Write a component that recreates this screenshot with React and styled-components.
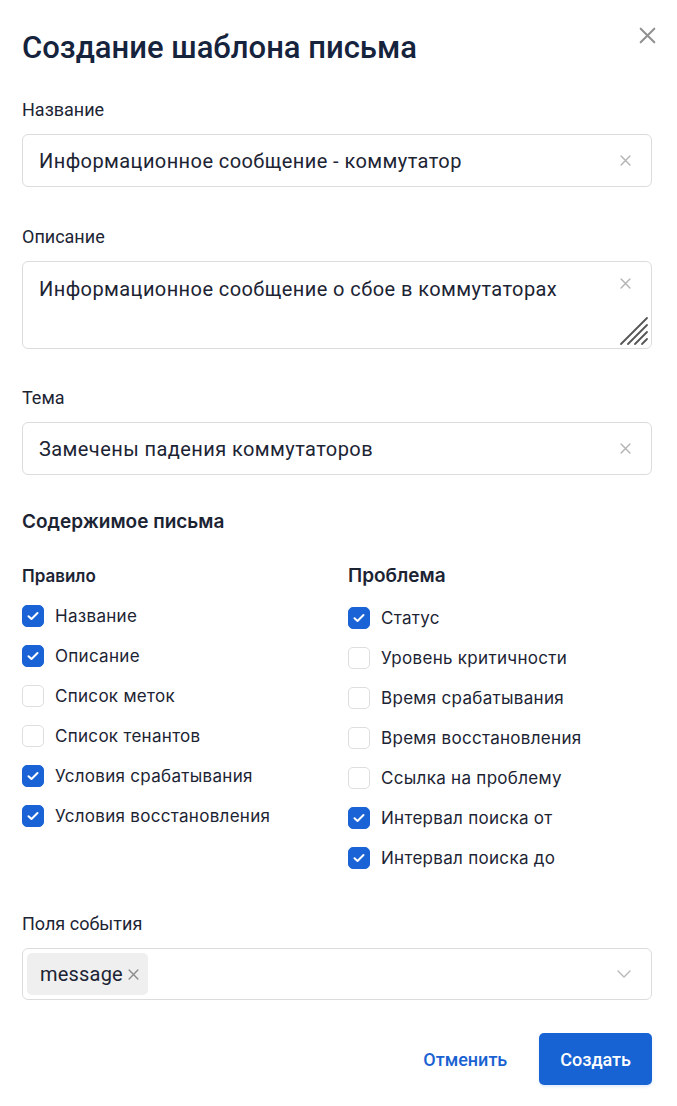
import React from "react";
import styled, { createGlobalStyle } from "styled-components";

const Global = createGlobalStyle`
  html, body { margin: 0; padding: 0; background: #ffffff; }
  body { font-family: Roboto, "Liberation Sans", sans-serif; color: #1c2434; }
  * { box-sizing: border-box; }
`;

const Dialog = styled.div`
  position: relative;
  width: 677px;
  padding: 30px 25px 22px 22px;
  background: #fff;
`;

const CloseButton = styled.button`
  position: absolute;
  top: 26px;
  right: 21px;
  width: 18px;
  height: 18px;
  padding: 0;
  border: 0;
  background: none;
  color: #909090;
  display: flex;
  align-items: center;
  justify-content: center;
`;

const Title = styled.h1`
  margin: 0 0 32px;
  font-size: 31px;
  line-height: 36px;
  font-weight: 500;
  color: #16233d;
  letter-spacing: 0;
`;

const Field = styled.div`
  display: flex;
  flex-direction: column;
  gap: 12px;
  margin-bottom: ${(p) => p.$mb ?? 38}px;
`;

const Label = styled.label`
  font-size: 18px;
  line-height: 24px;
  color: #1c2434;
`;

const Box = styled.div`
  position: relative;
  display: flex;
  align-items: ${(p) => (p.$multiline ? "flex-start" : "center")};
  height: ${(p) => p.$h}px;
  border: 1px solid #dcdcdc;
  border-radius: 6px;
  padding: ${(p) => (p.$multiline ? "15px 20px 0 16px" : "0 20px 0 16px")};
  background: #fff;
`;

const Value = styled.div`
  flex: 1;
  font-size: 20px;
  line-height: 24px;
  letter-spacing: 0.42px;
  color: #1c2434;
`;

const ClearIcon = styled.span`
  display: flex;
  color: #b4b4b4;
  margin-top: ${(p) => (p.$top ? "1px" : "0")};
`;

const Grip = styled.svg`
  position: absolute;
  right: 2px;
  bottom: 2px;
`;

const SectionTitle = styled.h2`
  margin: 0 0 30px;
  font-family: Inter, "Noto Sans", sans-serif;
  font-size: 19px;
  line-height: 24px;
  font-weight: 600;
  color: #1c2434;
`;

const Columns = styled.div`
  display: grid;
  grid-template-columns: 326px 1fr;
  margin-bottom: 34px;
`;

const Column = styled.div`
  display: flex;
  flex-direction: column;
`;

const GroupTitle = styled.div`
  font-family: Inter, "Noto Sans", sans-serif;
  font-size: ${(p) => p.$size}px;
  line-height: 24px;
  font-weight: 600;
  color: #1c2434;
  margin-bottom: ${(p) => p.$mb}px;
`;

const CheckRow = styled.label`
  display: flex;
  align-items: center;
  gap: 11px;
  height: 40px;
  font-family: Inter, "Noto Sans", sans-serif;
  font-size: 17px;
  letter-spacing: 0.3px;
  color: #1c2434;
`;

const CheckBox = styled.span`
  width: 22px;
  height: 22px;
  flex: none;
  border-radius: 5px;
  display: flex;
  align-items: center;
  justify-content: center;
  background: ${(p) => (p.$on ? "#1a63d6" : "#fff")};
  border: 1px solid ${(p) => (p.$on ? "#1a63d6" : "#dedede")};
`;

const Tag = styled.span`
  display: flex;
  align-items: center;
  gap: 5px;
  height: 42px;
  padding: 0 9px 0 13px;
  margin-left: -12px;
  border-radius: 5px;
  background: #efefef;
  font-size: 20px;
  letter-spacing: 0.2px;
  color: #1c2434;
`;

const TagX = styled.span`
  display: flex;
  color: #8c8c8c;
`;

const Spacer = styled.div`
  flex: 1;
`;

const Chevron = styled.span`
  display: flex;
  color: #b8b8b8;
`;

const Footer = styled.div`
  display: flex;
  justify-content: flex-end;
  align-items: center;
  margin-top: 33px;
`;

const Button = styled.button`
  height: 52px;
  padding: 0 ${(p) => (p.$primary ? 21 : 32)}px;
  border: 0;
  border-radius: 5px;
  font-family: Roboto, "Liberation Sans", sans-serif;
  font-size: 18px;
  font-weight: 500;
  background: ${(p) => (p.$primary ? "#1763d4" : "transparent")};
  color: ${(p) => (p.$primary ? "#fff" : "#1a62d2")};
  box-shadow: ${(p) => (p.$primary ? "0 2px 3px rgba(23, 99, 212, 0.12)" : "none")};
`;

const Cross = ({ size = 10, stroke = 1.4 }) => (
  <svg width={size} height={size} viewBox="0 0 10 10" fill="none">
    <path d="M1 1L9 9M9 1L1 9" stroke="currentColor" strokeWidth={stroke} strokeLinecap="round" />
  </svg>
);

const Tick = () => (
  <svg width="12" height="10" viewBox="0 0 12 10" fill="none">
    <path d="M1.5 5.2L4.5 8L10.5 2" stroke="#fff" strokeWidth="2" strokeLinecap="round" strokeLinejoin="round" />
  </svg>
);

const TextInput = ({ value, multiline }) => (
  <Box $h={multiline ? 88 : 53} $multiline={multiline}>
    <Value>{value}</Value>
    <ClearIcon $top={multiline}>
      <Cross size={11} stroke={1.3} />
    </ClearIcon>
    {multiline && (
      <Grip width="30" height="30" viewBox="0 0 30 30" fill="none">
        <path
          d="M2 28L28 2M9 28L28 9M16 28L28 16M23 28L28 23"
          stroke="#555"
          strokeWidth="1.8"
          strokeLinecap="round"
        />
      </Grip>
    )}
  </Box>
);

const Check = ({ label, on }) => (
  <CheckRow>
    <CheckBox $on={on}>{on && <Tick />}</CheckBox>
    {label}
  </CheckRow>
);

const ruleItems = [
  ["Название", true],
  ["Описание", true],
  ["Список меток", false],
  ["Список тенантов", false],
  ["Условия срабатывания", true],
  ["Условия восстановления", true],
];

const problemItems = [
  ["Статус", true],
  ["Уровень критичности", false],
  ["Время срабатывания", false],
  ["Время восстановления", false],
  ["Ссылка на проблему", false],
  ["Интервал поиска от", true],
  ["Интервал поиска до", true],
];

export default function App() {
  return (
    <>
      <Global />
      <Dialog>
        <CloseButton aria-label="Закрыть">
          <Cross size={17} stroke={1.2} />
        </CloseButton>
        <Title>Создание шаблона письма</Title>

        <Field>
          <Label>Название</Label>
          <TextInput value="Информационное сообщение - коммутатор" />
        </Field>

        <Field $mb={37}>
          <Label>Описание</Label>
          <TextInput multiline value="Информационное сообщение о сбое в коммутаторах" />
        </Field>

        <Field $mb={35}>
          <Label>Тема</Label>
          <TextInput value="Замечены падения коммутаторов" />
        </Field>

        <SectionTitle>Содержимое письма</SectionTitle>
        <Columns>
          <Column>
            <GroupTitle $size={17} $mb={8}>Правило</GroupTitle>
            {ruleItems.map(([l, on]) => (
              <Check key={l} label={l} on={on} />
            ))}
          </Column>
          <Column>
            <GroupTitle $size={19} $mb={10}>Проблема</GroupTitle>
            {problemItems.map(([l, on]) => (
              <Check key={l} label={l} on={on} />
            ))}
          </Column>
        </Columns>

        <Field $mb={0}>
          <Label>Поля события</Label>
          <Box $h={52}>
            <Tag>
              message
              <TagX>
                <Cross size={11} stroke={1.3} />
              </TagX>
            </Tag>
            <Spacer />
            <Chevron>
              <svg width="14" height="8" viewBox="0 0 14 8" fill="none">
                <path d="M1 1L7 7L13 1" stroke="currentColor" strokeWidth="1.4" strokeLinecap="round" strokeLinejoin="round" />
              </svg>
            </Chevron>
          </Box>
        </Field>

        <Footer>
          <Button>Отменить</Button>
          <Button $primary>Создать</Button>
        </Footer>
      </Dialog>
    </>
  );
}
